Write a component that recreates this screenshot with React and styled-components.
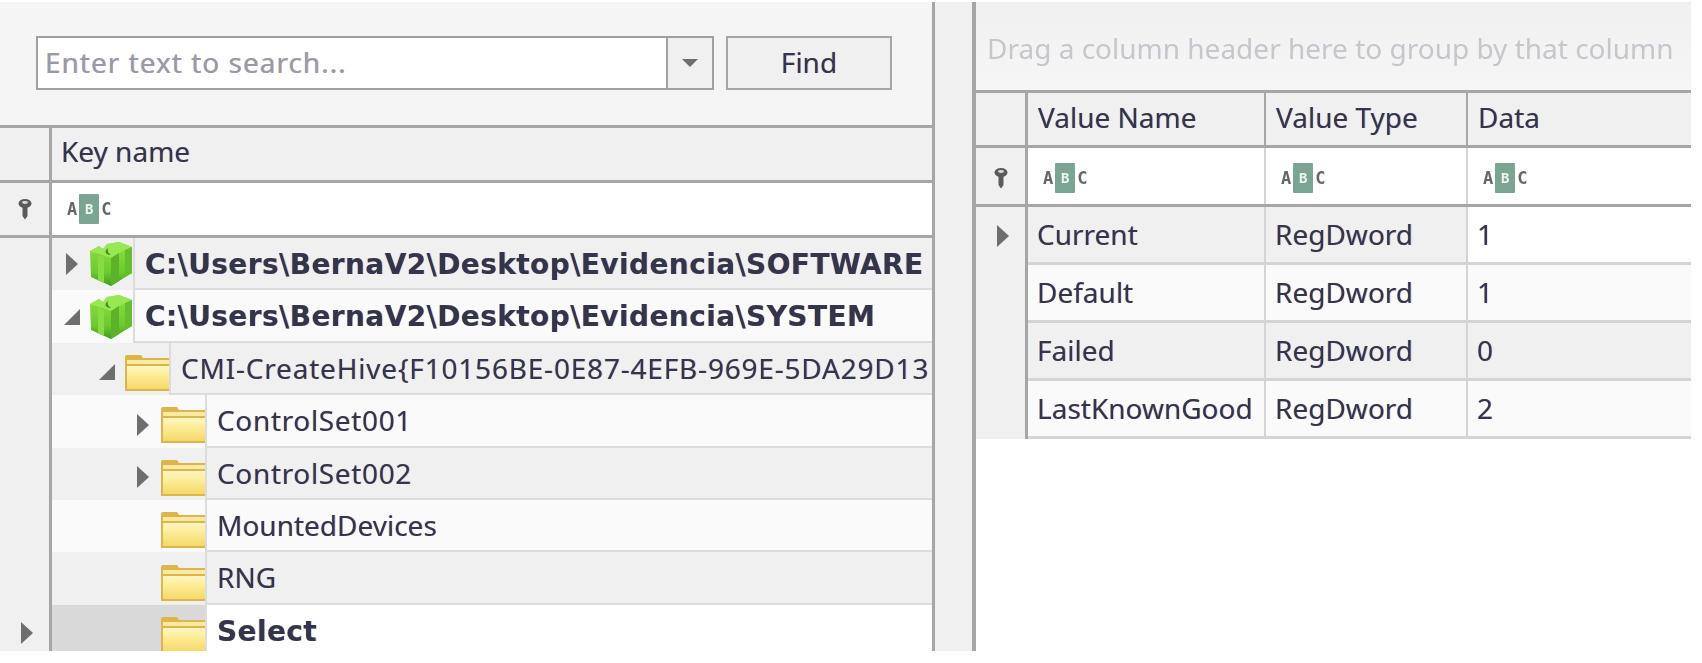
import React from "react";
import styled, { createGlobalStyle } from "styled-components";

const GlobalStyle = createGlobalStyle`
  html, body {
    margin: 0;
    padding: 0;
    background: #fff;
    overflow: hidden;
  }
`

const Frame = styled.div`
  display: flex;
  width: 1691px;
  height: 649px;
  margin-top: 2px;
  overflow: hidden;
  filter: blur(0.55px);
  font-family: "Noto Sans", "Open Sans", sans-serif;
  font-size: 28px;
  color: #34344a;
  text-shadow: -0.6px 0 rgba(225, 150, 60, 0.4), 0.6px 0 rgba(60, 110, 230, 0.4);
`

const LeftPane = styled.div`
  width: 935px;
  box-sizing: border-box;
  border-right: 3px solid #a6a6a6;
  display: flex;
  flex-direction: column;
  background: #fff;
  overflow: hidden;
`

const Splitter = styled.div`
  width: 37px;
  background: #f0f0f0;
`

const RightPane = styled.div`
  flex: 1;
  box-sizing: border-box;
  border-left: 4px solid #a6a6a6;
  display: flex;
  flex-direction: column;
  background: #fff;
  min-width: 0;
`

const SearchBar = styled.div`
  flex: none;
  height: 126px;
  box-sizing: border-box;
  padding: 34px 0 0 36px;
  display: flex;
  align-items: flex-start;
  gap: 12px;
  background: #f5f5f5;
  border-bottom: 3px solid #a6a6a6;
`

const SearchBox = styled.div`
  width: 678px;
  height: 54px;
  box-sizing: border-box;
  border: 2px solid #a0a0a0;
  display: flex;
  background: #fff;
`

const SearchText = styled.div`
  flex: 1;
  padding-left: 7px;
  line-height: 49px;
  letter-spacing: 1px;
  color: #9a9aa6;
`

const DropButton = styled.div`
  width: 44px;
  border-left: 2px solid #a0a0a0;
  background: #f0f0f0;
  display: flex;
  align-items: center;
  justify-content: center;
`

const DropArrow = styled.div`
  width: 0;
  height: 0;
  border-left: 8px solid transparent;
  border-right: 8px solid transparent;
  border-top: 8px solid #6e6e6e;
`

const FindButton = styled.div`
  width: 166px;
  height: 54px;
  box-sizing: border-box;
  border: 2px solid #a6a6a6;
  background: #f0f0f0;
  text-align: center;
  line-height: 49px;
`

const HeaderRow = styled.div`
  display: flex;
  flex: none;
  height: ${(p) => p.$h}px;
  box-sizing: border-box;
  background: #f0f0f0;
  border-bottom: 3px solid #a6a6a6;
`

const FilterRow = styled.div`
  display: flex;
  flex: none;
  height: ${(p) => p.$h}px;
  box-sizing: border-box;
  background: #fff;
  border-bottom: 3px solid #a6a6a6;
`

const Corner = styled.div`
  flex: none;
  width: ${(p) => p.$w}px;
  box-sizing: border-box;
  padding-top: ${(p) => p.$top || 0}px;
  background: #f0f0f0;
  border-right: 3px solid #a6a6a6;
  display: flex;
  align-items: center;
  justify-content: center;
`

const HeaderCell = styled.div`
  flex: ${(p) => (p.$w ? "none" : 1)};
  width: ${(p) => (p.$w ? `${p.$w}px` : "auto")};
  box-sizing: border-box;
  padding-left: ${(p) => p.$pad}px;
  line-height: ${(p) => p.$lh}px;
  border-right: ${(p) => (p.$last ? "none" : "2px solid #a6a6a6")};
  white-space: nowrap;
`

const FilterCell = styled.div`
  flex: ${(p) => (p.$w ? "none" : 1)};
  width: ${(p) => (p.$w ? `${p.$w}px` : "auto")};
  box-sizing: border-box;
  padding-left: 15px;
  padding-top: ${(p) => p.$top || 0}px;
  display: flex;
  align-items: center;
  border-right: ${(p) => (p.$last ? "none" : "2px solid #d4d4d4")};
`

const AbcMark = styled.div`
  display: flex;
  align-items: center;
  gap: 2px;
  font-family: "DejaVu Sans Mono", monospace;
  font-size: 17px;
  font-weight: bold;
  line-height: 1;
  color: #666;
  text-shadow: none;
`

const AbcBox = styled.span`
  width: 20px;
  height: 30px;
  display: flex;
  align-items: center;
  justify-content: center;
  background: #7aa593;
  border-radius: 1px;
  font-size: 14px;
  color: #eef5f1;
`

const TreeRow = styled.div`
  display: flex;
  flex: none;
  height: 52.4px;
`

const Indicator = styled.div`
  flex: none;
  width: 52px;
  box-sizing: border-box;
  padding: 4px 0 0 4px;
  background: #f0f0f0;
  border-right: 3px solid #a6a6a6;
  display: flex;
  align-items: center;
  justify-content: center;
`

const Indent = styled.div`
  flex: none;
  width: ${(p) => 81 + p.$level * 36}px;
  box-sizing: border-box;
  padding-top: ${(p) => p.$top}px;
  display: flex;
  align-items: center;
  justify-content: flex-end;
  overflow: hidden;
  background: ${(p) => (p.$focused ? "#d9d9d9" : p.$odd ? "#f0f0f0" : "#fafafa")};
`

const ArrowSlot = styled.div`
  width: 24px;
  margin-right: 5px;
  display: flex;
  justify-content: center;
`

const TreeCell = styled.div`
  flex: 1;
  min-width: 0;
  box-sizing: border-box;
  padding-left: 10px;
  line-height: ${(p) => (p.$bold ? 53 : 50)}px;
  white-space: nowrap;
  overflow: hidden;
  font-family: ${(p) => (p.$bold ? '"DejaVu Sans", sans-serif' : "inherit")};
  font-size: 28px;
  font-weight: ${(p) => (p.$bold ? 700 : 400)};
  letter-spacing: ${(p) => p.$track || 0}px;
  background: ${(p) => (p.$focused ? "#fff" : p.$odd ? "#f0f0f0" : "#fafafa")};
  border-left: 2px solid #dcdcdc;
  border-bottom: ${(p) => (p.$focused ? "none" : "2px solid #dcdcdc")};
`

const GroupPanel = styled.div`
  flex: none;
  height: 91px;
  box-sizing: border-box;
  padding: 4px 0 0 11px;
  line-height: 84px;
  background: linear-gradient(#f0f0f0, #f6f6f6);
  border-bottom: 3px solid #a6a6a6;
  color: #c6c6cc;
  text-shadow: none;
  white-space: nowrap;
  overflow: hidden;
`

const DataRow = styled.div`
  display: flex;
  flex: none;
  height: 58px;
`

const DataIndicator = styled.div`
  flex: none;
  width: 52px;
  box-sizing: border-box;
  padding-left: 4px;
  background: #f0f0f0;
  border-right: 3px solid #a6a6a6;
  display: flex;
  align-items: center;
  justify-content: center;
`

const DataCell = styled.div`
  flex: ${(p) => (p.$w ? "none" : 1)};
  width: ${(p) => (p.$w ? `${p.$w}px` : "auto")};
  box-sizing: border-box;
  padding-left: 9px;
  line-height: 54px;
  white-space: nowrap;
  background: ${(p) => p.$bg};
  border-right: ${(p) => (p.$last ? "none" : "2px solid #d4d4d4")};
  border-bottom: 3px solid #d4d4d4;
`

const Triangle = ({ open }) =>
  open ? (
    <svg width="18" height="18" viewBox="0 0 18 18">
      <path d="M1 17 L17 17 L17 1 Z" fill="#6e6e6e" />
    </svg>
  ) : (
    <svg width="12" height="22" viewBox="0 0 12 22">
      <path d="M0 0 L12 11 L0 22 Z" fill="#6e6e6e" />
    </svg>
  );

const KeyIcon = () => (
  <svg width="16" height="22" viewBox="0 0 16 22">
    <ellipse cx="8" cy="5.5" rx="6.5" ry="4.5" fill="#5a5a5a" />
    <ellipse cx="8" cy="4.5" rx="3" ry="1.4" fill="#d8d8d8" />
    <path d="M5.5 9 H10.5 V18 L8 21.5 L5.5 18 Z" fill="#5a5a5a" />
  </svg>
);

const HiveIcon = () => (
  <svg width="44" height="44" viewBox="0 0 44 44">
    <defs>
      <linearGradient id="hiveSide" x1="0" y1="0" x2="0" y2="1">
        <stop offset="0" stopColor="#8ee044" />
        <stop offset="0.7" stopColor="#6cc92e" />
        <stop offset="1" stopColor="#3f9a1e" />
      </linearGradient>
    </defs>
    <path d="M1 9 L10 4 L14 7 L18 2 L30 0 L43 5 L43 31 L22 44 L2 35 Z" fill="url(#hiveSide)" />
    <path d="M1 9 L10 4 L14 7 L18 2 L30 0 L43 5 L30 11 L22 16 Z" fill="#97e852" />
    <path d="M22 16 L22 44 L30 39 L30 11 Z" fill="#5cb32a" />
    <path d="M36 8 L36 35 L43 31 L43 5 Z" fill="#63bf2e" />
    <path d="M9 13 L9 38 L15 41 L15 15 Z" fill="#86dc42" />
    <path d="M19 6 C15 9 16 13 22 13 C19 11 18 9 19 6 Z" fill="#3d8a1b" />
  </svg>
);

const FolderIcon = () => (
  <svg width="45" height="37" viewBox="0 0 45 37">
    <defs>
      <linearGradient id="folderBody" x1="0" y1="0" x2="0" y2="1">
        <stop offset="0" stopColor="#fff6c4" />
        <stop offset="0.35" stopColor="#fdee9c" />
        <stop offset="1" stopColor="#f5d968" />
      </linearGradient>
    </defs>
    <path d="M1 3 Q1 1 3 1 L17 1 L19 4 L45 4 L45 37 L1 37 Z" fill="#dcb64c" />
    <path d="M3 6 L45 6 L45 10 L3 10 Z" fill="#fae9a0" />
    <path d="M3 12 L45 12 L45 35 L3 35 Z" fill="url(#folderBody)" />
  </svg>
);

const Abc = () => (
  <AbcMark>
    <span>A</span>
    <AbcBox>B</AbcBox>
    <span>C</span>
  </AbcMark>
);

const treeRows = [
  { label: "C:\\Users\\BernaV2\\Desktop\\Evidencia\\SOFTWARE", level: 0, arrow: "closed", hive: true, bold: true, odd: true, track: 0.4 },
  { label: "C:\\Users\\BernaV2\\Desktop\\Evidencia\\SYSTEM", level: 0, arrow: "open", hive: true, bold: true, track: 0.4 },
  { label: "CMI-CreateHive{F10156BE-0E87-4EFB-969E-5DA29D13", level: 1, arrow: "open", odd: true, track: 0.8 },
  { label: "ControlSet001", level: 2, arrow: "closed", track: 0.65 },
  { label: "ControlSet002", level: 2, arrow: "closed", odd: true, track: 0.65 },
  { label: "MountedDevices", level: 2 },
  { label: "RNG", level: 2, odd: true },
  { label: "Select", level: 2, bold: true, focused: true, track: 0.4 },
];

const dataRows = [
  { name: "Current", data: "1", focused: true },
  { name: "Default", data: "1" },
  { name: "Failed", data: "0", odd: true },
  { name: "LastKnownGood", data: "2" },
];

const COL_NAME = 238;
const COL_TYPE = 202;

const App = () => {
  return (
    <>
      <GlobalStyle />
      <Frame>
        <LeftPane>
          <SearchBar>
            <SearchBox>
              <SearchText>Enter text to search...</SearchText>
              <DropButton>
                <DropArrow />
              </DropButton>
            </SearchBox>
            <FindButton>Find</FindButton>
          </SearchBar>
          <HeaderRow $h={55}>
            <Corner $w={52} />
            <HeaderCell $last $pad={9} $lh={47}>Key name</HeaderCell>
          </HeaderRow>
          <FilterRow $h={55}>
            <Corner $w={52}>
              <KeyIcon />
            </Corner>
            <FilterCell $last>
              <Abc />
            </FilterCell>
          </FilterRow>
          {treeRows.map((row) => (
            <TreeRow key={row.label}>
              <Indicator>{row.focused && <Triangle />}</Indicator>
              <Indent $level={row.level} $odd={row.odd} $focused={row.focused} $top={row.hive ? 0 : 7}>
                <ArrowSlot>
                  {row.arrow && <Triangle open={row.arrow === "open"} />}
                </ArrowSlot>
                {row.hive ? <HiveIcon /> : <FolderIcon />}
              </Indent>
              <TreeCell $bold={row.bold} $odd={row.odd} $focused={row.focused} $track={row.track}>
                {row.label}
              </TreeCell>
            </TreeRow>
          ))}
        </LeftPane>
        <Splitter />
        <RightPane>
          <GroupPanel>Drag a column header here to group by that column</GroupPanel>
          <HeaderRow $h={55}>
            <Corner $w={52} />
            <HeaderCell $w={COL_NAME} $pad={10} $lh={49}>Value Name</HeaderCell>
            <HeaderCell $w={COL_TYPE} $pad={10} $lh={49}>Value Type</HeaderCell>
            <HeaderCell $last $pad={10} $lh={49}>Data</HeaderCell>
          </HeaderRow>
          <FilterRow $h={59}>
            <Corner $w={52} $top={4}>
              <KeyIcon />
            </Corner>
            <FilterCell $w={COL_NAME} $top={4}>
              <Abc />
            </FilterCell>
            <FilterCell $w={COL_TYPE} $top={4}>
              <Abc />
            </FilterCell>
            <FilterCell $last $top={4}>
              <Abc />
            </FilterCell>
          </FilterRow>
          {dataRows.map((row) => (
            <DataRow key={row.name}>
              <DataIndicator>{row.focused && <Triangle />}</DataIndicator>
              <DataCell $w={COL_NAME} $bg={row.odd || row.focused ? "#f0f0f0" : "#fafafa"}>
                {row.name}
              </DataCell>
              <DataCell $w={COL_TYPE} $bg={row.odd || row.focused ? "#f0f0f0" : "#fafafa"}>
                RegDword
              </DataCell>
              <DataCell $last $bg={row.focused ? "#fff" : row.odd ? "#f0f0f0" : "#fafafa"}>
                {row.data}
              </DataCell>
            </DataRow>
          ))}
        </RightPane>
      </Frame>
    </>
  )
}

export default App
